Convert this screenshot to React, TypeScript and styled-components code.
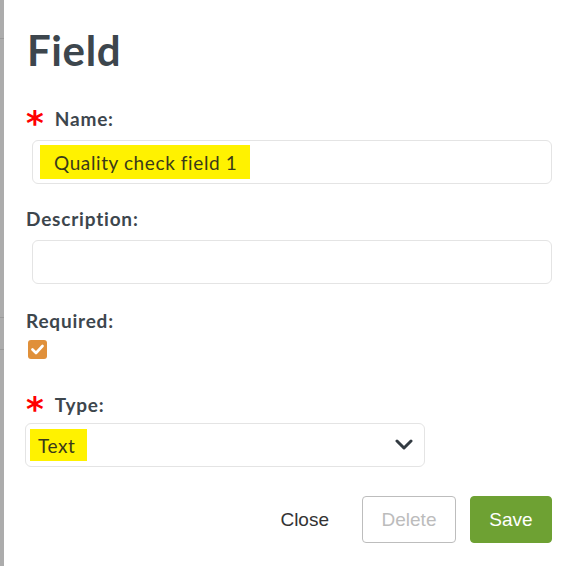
import React, { useState } from 'react'
import styled, { createGlobalStyle } from 'styled-components'

const GlobalStyle = createGlobalStyle`
  html, body {
    margin: 0;
    padding: 0;
    background: #ffffff;
  }
  * {
    box-sizing: border-box;
  }
`

const Page = styled.div`
  display: flex;
  width: 574px;
  height: 566px;
  overflow: hidden;
`

const Backdrop = styled.div`
  width: 4px;
  flex: none;
  background:
    linear-gradient(#9a9a9a, #9a9a9a) 0 38px / 100% 1px no-repeat,
    linear-gradient(#9a9a9a, #9a9a9a) 0 317px / 100% 1px no-repeat,
    linear-gradient(#9a9a9a, #9a9a9a) 0 349px / 100% 1px no-repeat,
    #acacac;
`

const Panel = styled.div`
  flex: 1;
  display: flex;
  flex-direction: column;
  padding: 22px 22px 0 22px;
  font-family: Lato, 'Open Sans', sans-serif;
  color: #3d464d;
`

const Title = styled.h1`
  margin: 0 0 0 1px;
  font-size: 42px;
  line-height: 56px;
  font-weight: 700;
  letter-spacing: 0.6px;
`

const Label = styled.div<{ $top: number }>`
  display: flex;
  align-items: center;
  gap: 11px;
  margin-top: ${({ $top }) => $top}px;
  font-size: 19px;
  line-height: 22px;
  font-weight: 700;
  letter-spacing: 0.8px;
`

const Asterisk = styled.span`
  color: #ff0000;
  font-size: 34px;
  line-height: 22px;
  height: 22px;
  font-weight: 700;
  font-family: 'DejaVu Sans', sans-serif;
  padding-top: 4px;
  letter-spacing: 0;
`

const InputBox = styled.div<{ $indent: number; $width: number; $top?: number }>`
  display: flex;
  align-items: center;
  margin: ${({ $top }) => $top ?? 10}px 0 0 ${({ $indent }) => $indent}px;
  width: ${({ $width }) => $width}px;
  height: 44px;
  border: 1px solid #e4e4e4;
  border-radius: 6px;
  padding: 0 7px;
  position: relative;
`

const Highlight = styled.span`
  display: inline-flex;
  align-items: center;
  height: 34px;
  padding: 0 13px 0 14px;
  background: #fff200;
  font-size: 19px;
  font-weight: 400;
  letter-spacing: 0.6px;
  color: #3a3a1a;
`

const SelectHighlight = styled(Highlight)`
  height: 32px;
  padding: 0 12px 0 8px;
  margin-left: -3px;
`

const Chevron = styled.svg`
  position: absolute;
  right: 11px;
  top: 50%;
  margin-top: -6px;
`

const CheckBox = styled.div`
  margin: 8px 0 0 2px;
  width: 19px;
  height: 19px;
  border-radius: 3px;
  background: #e0903a;
  display: flex;
  align-items: center;
  justify-content: center;
`

const Footer = styled.div`
  display: flex;
  justify-content: flex-end;
  align-items: center;
  margin-top: 29px;
  font-family: 'Liberation Sans', Arial, sans-serif;
`

const Button = styled.button<{ $variant: 'link' | 'outline' | 'primary' }>`
  height: 47px;
  font-family: inherit;
  font-size: 19px;
  border-radius: 4px;
  cursor: pointer;
  padding: 0 18px;
  border: 1px solid
    ${({ $variant }) => ($variant === 'outline' ? '#bdbdbd' : $variant === 'primary' ? '#6ea133' : 'transparent')};
  background: ${({ $variant }) => ($variant === 'primary' ? '#6ea133' : 'transparent')};
  color: ${({ $variant }) => ($variant === 'primary' ? '#ffffff' : $variant === 'outline' ? '#bcbcbc' : '#333333')};
  margin-left: ${({ $variant }) => ($variant === 'link' ? 0 : 14)}px;
  width: ${({ $variant }) => ($variant === 'primary' ? 82 : $variant === 'outline' ? 94 : 'auto')}px;
`

export default function App() {
  const [required, setRequired] = useState(true)

  return (
    <>
      <GlobalStyle />
      <Page>
        <Backdrop />
        <Panel>
          <Title>Field</Title>

          <Label $top={30}>
            <Asterisk>*</Asterisk>
            Name:
          </Label>
          <InputBox $indent={6} $width={520}>
            <Highlight>Quality check field 1</Highlight>
          </InputBox>

          <Label $top={24}>Description:</Label>
          <InputBox $indent={6} $width={520} />

          <Label $top={26}>Required:</Label>
          <CheckBox onClick={() => setRequired(!required)}>
            {required && (
              <svg width="13" height="11" viewBox="0 0 13 11">
                <path d="M1.5 5.5 L5 9 L11.5 2" fill="none" stroke="#ffffff" strokeWidth="2.6" strokeLinecap="round" strokeLinejoin="round" />
              </svg>
            )}
          </CheckBox>

          <Label $top={35}>
            <Asterisk>*</Asterisk>
            Type:
          </Label>
          <InputBox $indent={-1} $width={400} $top={7}>
            <SelectHighlight>Text</SelectHighlight>
            <Chevron width="18" height="11" viewBox="0 0 18 11">
              <path d="M2 2 L9 9 L16 2" fill="none" stroke="#333b42" strokeWidth="3" strokeLinecap="round" strokeLinejoin="round" />
            </Chevron>
          </InputBox>

          <Footer>
            <Button $variant="link">Close</Button>
            <Button $variant="outline">Delete</Button>
            <Button $variant="primary">Save</Button>
          </Footer>
        </Panel>
      </Page>
    </>
  )
}
